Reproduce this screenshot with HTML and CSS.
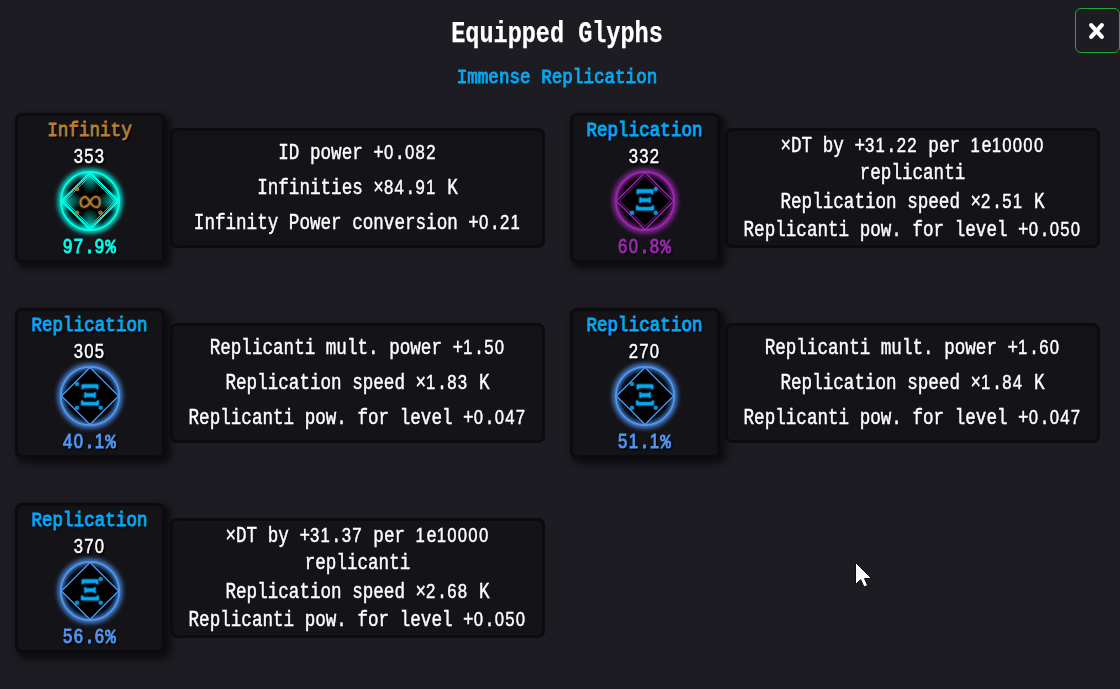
FILE: index.html
```html
<!DOCTYPE html>
<html lang="en">
<head>
<meta charset="utf-8">
<title>Equipped Glyphs</title>
<link rel="stylesheet" href="styles.css">
</head>
<body>
<svg class="defs" aria-hidden="true">
  <defs>
    <radialGradient id="flare"><stop offset="0" stop-color="#00ffea"/><stop offset=".25" stop-color="#00ffea" stop-opacity=".65"/><stop offset="1" stop-color="#00ffea" stop-opacity="0"/></radialGradient>
    <filter id="soft" x="-30%" y="-30%" width="160%" height="160%"><feGaussianBlur stdDeviation="2.4"/></filter>
    <clipPath id="disc"><circle r="29"/></clipPath>
    <g id="base"><circle r="29.3" fill="#000"/><circle r="29.5" fill="none" stroke="currentColor" stroke-width="5" filter="url(#soft)"/></g>
    <path id="diamond" d="M0-28.5 28.5 0 0 28.5-28.5 0Z" fill="#000" stroke="currentColor" stroke-width="1.3"/>
    <circle id="rim" r="29.2" fill="none" stroke="currentColor" stroke-width="1.7"/>
    <g id="xi" class="xi"><path d="M-8.2-11.5H8.2V-6.7H7L5.8-8.3H-5.8L-7-6.7H-8.2ZM-5.5-3.8H-4.3L-3.8-2.6H3.8L4.3-3.8H5.5V2H4.3L3.8.8H-3.8L-4.3 2H-5.5ZM-8.8 4.4H-7.6L-6 6.3H6L7.6 4.4H8.8V9.2H-8.8Z"/></g>
  </defs>
</svg>
<main class="modal">
  <button class="close" aria-label="Close"><svg viewBox="0 0 16 16"><path d="M3 2.5 13 13.5M13 2.5 3 13.5"/></svg></button>
  <h1 class="title">Equipped Glyphs</h1>
  <p class="set-name">Immense Replication</p>
  <section class="glyphs">
    <article class="glyph infinity celestial">
      <div class="card">
        <p class="type">Infinity</p><p class="level"><span class="n">353</span></p>
        <svg class="icon" viewBox="-40 -40 80 80">
          <use href="#base"/><use href="#diamond"/>
          <g clip-path="url(#disc)" fill="url(#flare)"><ellipse cy="-28" rx="12" ry="21"/><ellipse cy="28" rx="12" ry="21"/><ellipse cx="-28" rx="21" ry="12"/><ellipse cx="28" rx="21" ry="12"/></g>
          <g fill="none" stroke="currentColor"><path d="M0-29 29 0 0 29-29 0Z"/><path stroke-width=".8" d="M0-27 27 0 0 27-27 0ZM0-25 25 0 0 25-25 0Z"/></g>
          <use href="#rim"/>
          <path class="inf" d="M0 1.2C2-3 4.2-4.3 6.2-4.3 11-4.3 11 6.3 6.2 6.3 2.5 6.3 0 1.2-2.2-2.2-5-6.2-9.8-2.8-9.5 1.8-9.2 7-3.6 8 0 1.2Z"/>
          <g class="dots"><circle cx="-13" cy="-12" r="2.3"/><circle cx="-13" cy="11.7" r="2.3"/><circle cx="10.5" cy="11.7" r="2.3"/></g>
        </svg>
        <p class="rarity"><span class="n">97</span>.<span class="n">9</span>%</p>
      </div>
      <div class="effects"><p>ID power +<span class="n">0</span>.<span class="n">082</span></p><p>Infinities ×<span class="n">84</span>.<span class="n">91</span> K</p><p>Infinity Power conversion +<span class="n">0</span>.<span class="n">21</span></p></div>
    </article>
    <article class="glyph replication epic">
      <div class="card">
        <p class="type">Replication</p><p class="level"><span class="n">332</span></p>
        <svg class="icon" viewBox="-40 -40 80 80">
          <use href="#base"/><use href="#diamond"/><path d="M0-25.5 25.5 0 0 25.5-25.5 0Z" fill="none" stroke="currentColor" stroke-width=".9"/><use href="#rim"/><use href="#xi"/>
          <g class="dots"><circle cx="10.7" cy="-12" r="2.3"/><circle cx="-13" cy="11.7" r="2.3"/><circle cx="10.7" cy="11.7" r="2.3"/></g>
        </svg>
        <p class="rarity"><span class="n">60</span>.<span class="n">8</span>%</p>
      </div>
      <div class="effects"><p class="two-line">×DT by +<span class="n">31</span>.<span class="n">22</span> per <span class="n">1</span>e<span class="n">10000</span> replicanti</p><p>Replication speed ×<span class="n">2</span>.<span class="n">51</span> K</p><p>Replicanti pow. for level +<span class="n">0</span>.<span class="n">050</span></p></div>
    </article>
    <article class="glyph replication rare">
      <div class="card">
        <p class="type">Replication</p><p class="level"><span class="n">305</span></p>
        <svg class="icon" viewBox="-40 -40 80 80">
          <use href="#base"/><use href="#diamond"/><use href="#rim"/><use href="#xi"/>
          <g class="dots"><circle cx="-13" cy="-12" r="2.3"/><circle cx="-13" cy="11.7" r="2.3"/><circle cx="10.7" cy="11.7" r="2.3"/></g>
        </svg>
        <p class="rarity"><span class="n">40</span>.<span class="n">1</span>%</p>
      </div>
      <div class="effects"><p>Replicanti mult. power +<span class="n">1</span>.<span class="n">50</span></p><p>Replication speed ×<span class="n">1</span>.<span class="n">83</span> K</p><p>Replicanti pow. for level +<span class="n">0</span>.<span class="n">047</span></p></div>
    </article>
    <article class="glyph replication rare">
      <div class="card">
        <p class="type">Replication</p><p class="level"><span class="n">270</span></p>
        <svg class="icon" viewBox="-40 -40 80 80">
          <use href="#base"/><use href="#diamond"/><use href="#rim"/><use href="#xi"/>
          <g class="dots"><circle cx="-13" cy="-12" r="2.3"/><circle cx="-13" cy="11.7" r="2.3"/><circle cx="10.7" cy="11.7" r="2.3"/></g>
        </svg>
        <p class="rarity"><span class="n">51</span>.<span class="n">1</span>%</p>
      </div>
      <div class="effects"><p>Replicanti mult. power +<span class="n">1</span>.<span class="n">60</span></p><p>Replication speed ×<span class="n">1</span>.<span class="n">84</span> K</p><p>Replicanti pow. for level +<span class="n">0</span>.<span class="n">047</span></p></div>
    </article>
    <article class="glyph replication rare">
      <div class="card">
        <p class="type">Replication</p><p class="level"><span class="n">370</span></p>
        <svg class="icon" viewBox="-40 -40 80 80">
          <use href="#base"/><use href="#diamond"/><use href="#rim"/><use href="#xi"/>
          <g class="dots"><circle cx="10.7" cy="-12" r="2.3"/><circle cx="-13" cy="11.7" r="2.3"/><circle cx="10.7" cy="11.7" r="2.3"/></g>
        </svg>
        <p class="rarity"><span class="n">56</span>.<span class="n">6</span>%</p>
      </div>
      <div class="effects"><p class="two-line">×DT by +<span class="n">31</span>.<span class="n">37</span> per <span class="n">1</span>e<span class="n">10000</span> replicanti</p><p>Replication speed ×<span class="n">2</span>.<span class="n">68</span> K</p><p>Replicanti pow. for level +<span class="n">0</span>.<span class="n">050</span></p></div>
    </article>
  </section>
</main>
<svg class="cursor" viewBox="0 0 20 28"><path d="M1.5 1.5V23.5L6.7 18.7 10 26 13.6 24.4 10.5 17.5H17.5Z"/></svg>
</body>
</html>
```
FILE: styles.css
```css
* { box-sizing: border-box; }
body {
  margin: 0;
  height: 689px;
  overflow: hidden;
  background: #1d1c22;
  color: #fff;
  font: 17.6px/27px "Liberation Mono", monospace;
}
p, h1 { margin: 0; }
.defs { position: absolute; width: 0; height: 0; }
.modal { padding: 15px 21px 0 15px; text-align: center; }
.title {
  font-size: 23.5px;
  line-height: 38px;
  transform: scaleY(1.25);
  -webkit-text-stroke: .2px;
}
.set-name {
  margin-top: 11px;
  color: #03a9f4;
  -webkit-text-stroke: .8px;
  transform: scaleY(1.2);
}
.close {
  position: absolute;
  top: 8px;
  left: 1075px;
  width: 45px;
  height: 45px;
  padding: 0 2px 0 0;
  display: grid;
  place-items: center;
  background: #1d1c22;
  border: 1px solid #22aa36;
  border-radius: 6px;
}
.close svg { width: 17px; height: 18px; }
.close path { stroke: #fff; stroke-width: 4; stroke-linecap: round; }
.glyphs {
  margin-top: 22px;
  display: grid;
  grid-template-columns: 530px 530px;
  column-gap: 25px;
  row-gap: 45px;
}
.glyph { display: flex; align-items: center; gap: 5px; height: 150px; }
.card, .effects {
  background: #141318;
  border: 3px solid #0c0b0e;
  border-radius: 7px;
}
.card {
  width: 150px;
  height: 150px;
  padding-right: 1px;
  box-shadow: 4px 4px 6px 2px #0e0d11;
}
.effects {
  width: 375px;
  height: 120px;
  display: flex;
  flex-direction: column;
  justify-content: space-evenly;
  -webkit-text-stroke: .35px;
}
.effects p { transform: scaleY(1.21); line-height: 22.5px; margin: 2.25px 0; }
.effects .two-line { margin: 5px 0 4.5px; }
.card p {
  transform: scaleY(1.2);
  text-shadow: 1.5px 1.5px 1.5px #000;
  -webkit-text-stroke: .75px;
}
.card .level { -webkit-text-stroke: .35px; }
.card .type { transform: translateY(1px) scaleY(1.2); }
.n {
  font-family: "Liberation Sans", sans-serif;
  font-size: .95em;
  letter-spacing: .0755em;
}
.icon {
  display: block;
  width: 80px;
  height: 80px;
  margin: -10px auto -8px;
  color: var(--rarity);
}
.type { color: var(--type); }
.rarity { color: var(--rarity); }
.xi { fill: var(--type); filter: drop-shadow(0 0 1px var(--type)); }
.inf { fill: none; stroke: var(--type); stroke-width: 1.6; filter: drop-shadow(0 0 1px var(--type)); }
.dots { fill: var(--type); opacity: .85; }
.infinity { --type: #b67f33; }
.replication { --type: #03a9f4; }
.celestial { --rarity: #00ffea; }
.epic { --rarity: #9c27b0; }
.rare { --rarity: #5096f3; }
.cursor { position: absolute; left: 854px; top: 561px; width: 20px; height: 28px; }
.cursor path { fill: #fff; stroke: #111; stroke-width: 1; }
```
